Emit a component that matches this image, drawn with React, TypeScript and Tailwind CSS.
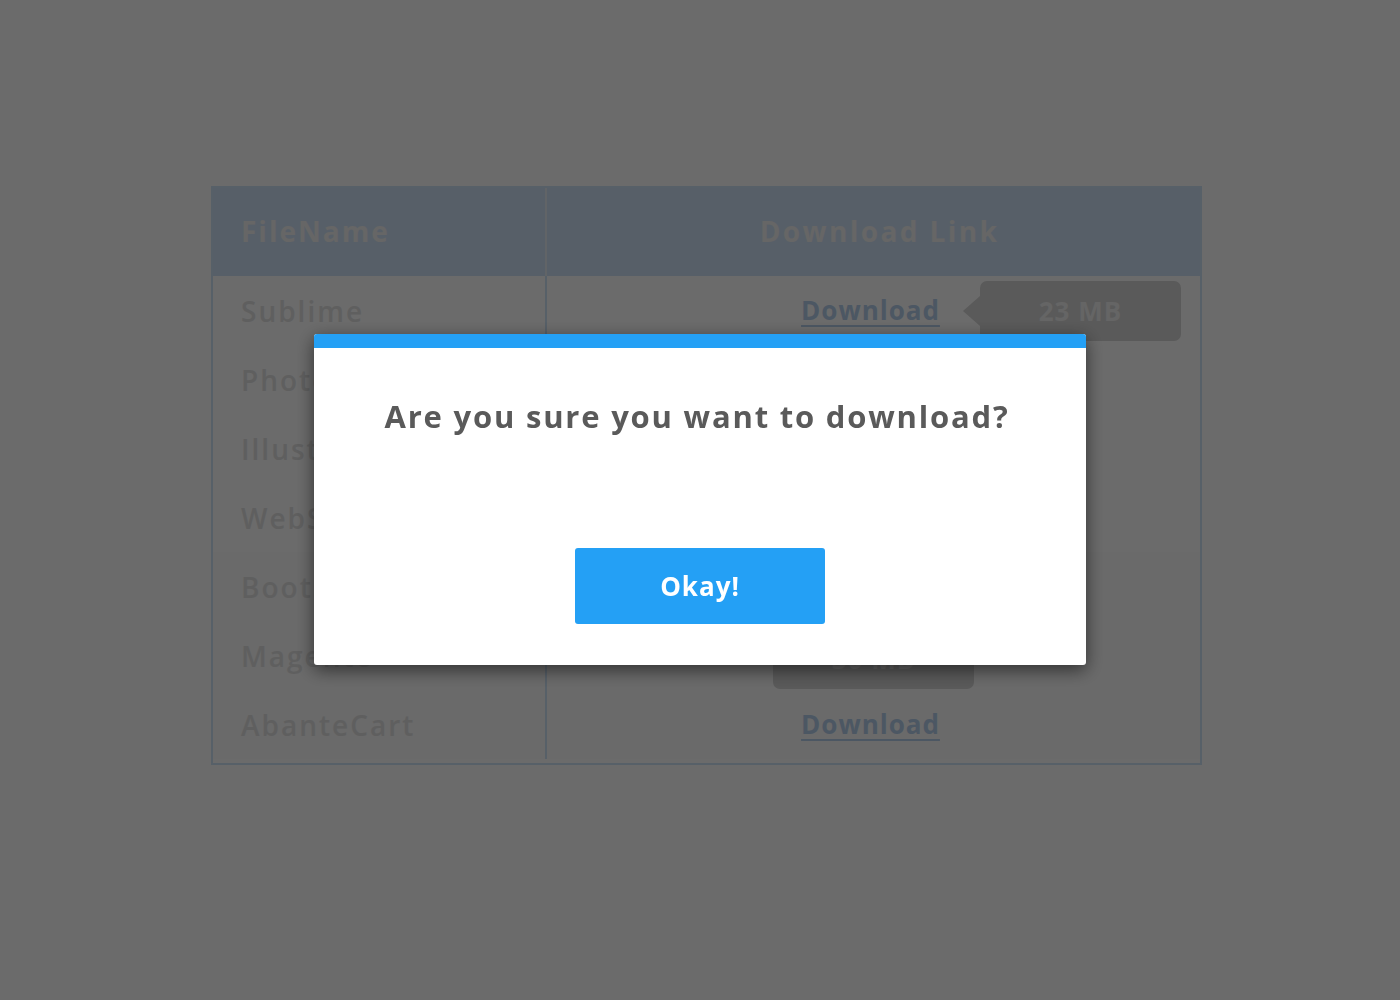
import React from "react";

interface FileRow {
  name: string;
  size: string;
}

const files: FileRow[] = [
  { name: "Sublime", size: "23 MB" },
  { name: "Photoshop", size: "1.2 GB" },
  { name: "Illustrator", size: "980 MB" },
  { name: "WebStorm", size: "210 MB" },
  { name: "Bootstrap", size: "4 MB" },
  { name: "Magento", size: "30 MB" },
  { name: "AbanteCart", size: "12 MB" },
];

const font = { fontFamily: '"Open Sans", "Noto Sans", sans-serif' };

const App: React.FC = () => {
  return (
    <div className="relative min-h-[1000px] bg-white" style={font}>
      {/* Page content */}
      <div className="pt-[186px] pl-[211px]">
        <div className="w-[991px] border-2 border-[#cfe4f8] pb-[4px]">
          <table className="w-full border-collapse">
            <thead>
              <tr className="h-[88px] bg-[#d0e3f8]">
                <th className="w-[333px] border-r-2 border-[#e6eef6] pb-[2px] pl-[28px] text-left text-[28px] font-bold tracking-[2px] text-[#f2f2f2]">
                  FileName
                </th>
                <th className="pb-[2px] pl-[12px] text-center text-[28px] font-bold tracking-[2.4px] text-[#f2f2f2]">
                  Download Link
                </th>
              </tr>
            </thead>
            <tbody>
              {files.map((f, i) => (
                <tr
                  key={f.name}
                  className={`h-[69px] ${i >= 4 ? "bg-[#fcfcfc]" : "bg-white"}`}
                >
                  <td className="border-r-2 border-[#cfe4f8] pl-[28px] text-[28px] font-semibold tracking-[2px] text-[#e3e3e3]">
                    {f.name}
                  </td>
                  <td className="relative text-center">
                    <a
                      href="#"
                      className="-ml-[6px] text-[26px] font-bold tracking-[1px] text-[#b6cfec] underline decoration-2 underline-offset-[5px]"
                    >
                      Download
                    </a>
                    {i === 0 && (
                      <div className="absolute left-[433px] top-[5px] flex h-[60px] w-[201px] items-center justify-center rounded-[7px] bg-[#d6d6d6] text-[26px] font-bold tracking-[1px] text-[#f0f0f0]">
                        <span className="absolute -left-[17px] top-[15px] h-0 w-0 border-y-[15px] border-r-[17px] border-y-transparent border-r-[#d6d6d6]" />
                        {f.size}
                      </div>
                    )}
                    {i === 5 && (
                      <div className="absolute left-[226px] top-[8px] flex h-[60px] w-[201px] items-center justify-center rounded-[7px] bg-[#d6d6d6] text-[26px] font-bold tracking-[1px] text-[#f0f0f0]">
                        {f.size}
                      </div>
                    )}
                  </td>
                </tr>
              ))}
            </tbody>
          </table>
        </div>
      </div>

      {/* Overlay */}
      <div className="fixed inset-0 bg-black/[0.58]" />

      {/* Modal */}
      <div className="fixed inset-0 flex justify-center pt-[334px]">
        <div className="h-[331px] w-[772px] overflow-hidden rounded-[3px] bg-white shadow-[0_5px_18px_rgba(0,0,0,0.55)]">
          <div className="h-[14px] bg-[#24a0f5]" />
          <div className="flex flex-col items-center pt-[48px]">
            <h2 className="-ml-[6px] text-[31px] font-bold leading-[41px] tracking-[1.8px] text-[#5a5a5a]">
              Are you sure you want to download?
            </h2>
            <button className="mt-[111px] h-[76px] w-[250px] rounded-[3px] bg-[#24a0f5] text-[26px] font-bold tracking-[1px] text-white">
              Okay!
            </button>
          </div>
        </div>
      </div>
    </div>
  );
};

export default App;
